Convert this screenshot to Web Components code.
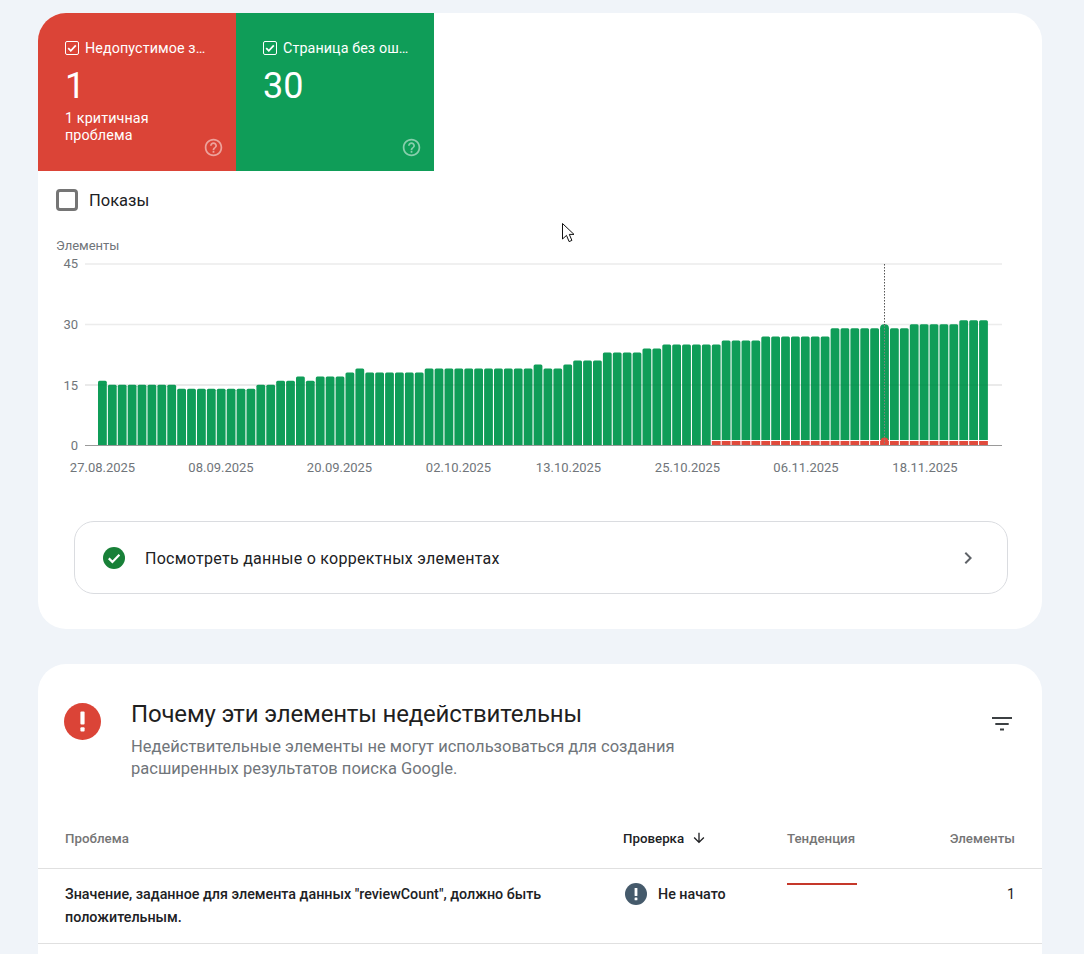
<!DOCTYPE html>
<html lang="ru">
<head>
<meta charset="utf-8">
<title>Элементы</title>
<style>
html,body{margin:0;height:954px;overflow:hidden;background:#f0f4f9}
body{font-family:Roboto,"Liberation Sans",sans-serif;color:#1f1f1f}
</style>
</head>
<body>
<gsc-page>
  <gsc-card>
    <div style="display:flex">
      <gsc-tile color="#db4437" label="Недопустимое значение" value="1">1 критичная<br>проблема</gsc-tile>
      <gsc-tile color="#0f9d58" label="Страница без ошибок" value="30"></gsc-tile>
    </div>
    <gsc-toggle>Показы</gsc-toggle>
    <gsc-chart></gsc-chart>
    <gsc-link-row>Посмотреть данные о корректных элементах</gsc-link-row>
  </gsc-card>
  <gsc-card flush>
    <gsc-issue-head title-text="Почему эти элементы недействительны">Недействительные элементы не могут использоваться для создания расширенных результатов поиска Google.</gsc-issue-head>
    <gsc-issue-table></gsc-issue-table>
  </gsc-card>
</gsc-page>
<gsc-cursor></gsc-cursor>
<script>
const mk=(html)=>{const t=document.createElement('template');t.innerHTML=html;return t};
class Base extends HTMLElement{
  constructor(){super();this.attachShadow({mode:'open'});this.shadowRoot.append(this.constructor.tpl.content.cloneNode(true))}
}
class GscPage extends Base{static tpl=mk(`<style>:host{display:flex;flex-direction:column;gap:35px;padding:13px 42px 0 38px}</style><slot></slot>`)}
class GscCard extends Base{static tpl=mk(`<style>:host{display:block;background:#fff;border-radius:28px;overflow:hidden}:host([flush]){border-radius:28px 28px 0 0}</style><slot></slot>`)}
class GscTile extends Base{
  static tpl=mk(`<style>
  :host{display:block;position:relative;box-sizing:border-box;width:198px;height:158px;padding:27px 0 0 27px;color:#fff}
  .top{display:flex;align-items:center;gap:6px;height:16px}
  svg.c{flex:none;width:14px;height:14px}
  .l{font-size:14.3px;line-height:16px;font-weight:400;letter-spacing:.1px;white-space:nowrap;overflow:hidden;text-overflow:ellipsis;width:127px}
  .v{font-size:36px;line-height:42px;margin-top:9px;height:42px}
  .s{font-size:14.3px;line-height:17px;font-weight:400;letter-spacing:.12px;margin-top:3px;max-width:120px}
  svg.h{position:absolute;right:12px;bottom:13.5px;width:21px;height:21px;fill:#fff;opacity:.5}
  </style>
  <div class="top"><svg class="c" viewBox="0 0 14 14"><rect x=".5" y=".5" width="13" height="13" rx="1.5" fill="none" stroke="#fff"/><path d="M3.2 7.2l2.6 2.6 5-5.4" fill="none" stroke="#fff" stroke-width="1.8"/></svg><div class="l"></div></div>
  <div class="v"></div><div class="s"><slot></slot></div>
  <svg class="h" viewBox="0 0 24 24"><path d="M11 18h2v-2h-2v2zm1-16C6.48 2 2 6.48 2 12s4.48 10 10 10 10-4.48 10-10S17.52 2 12 2zm0 18c-4.41 0-8-3.59-8-8s3.59-8 8-8 8 3.59 8 8-3.59 8-8 8zm0-14c-2.21 0-4 1.79-4 4h2c0-1.1.9-2 2-2s2 .9 2 2c0 2-3 1.75-3 5h2c0-2.25 3-2.5 3-5 0-2.21-1.79-4-4-4z"/></svg>`);
  connectedCallback(){const r=this.shadowRoot;this.style.background=this.getAttribute('color');
    r.querySelector('.l').textContent=this.getAttribute('label');r.querySelector('.v').textContent=this.getAttribute('value')}
}
class GscToggle extends Base{static tpl=mk(`<style>
  :host{display:flex;align-items:center;gap:11px;height:22px;margin:18px 0 0 18px;font-size:16.5px;color:#202124}
  i{display:block;box-sizing:border-box;width:22px;height:22px;border:3px solid #757575;border-radius:4px}
  </style><i></i><span><slot></slot></span>`)}
class GscChart extends Base{
  static tpl=mk(`<style>:host{display:block;height:286px;margin-top:24px}svg{display:block}
  text{font-family:Roboto,"Liberation Sans",sans-serif;font-size:13px;fill:#70757a}</style>
  <svg width="1004" height="250" viewBox="38 235 1004 250"></svg>`);
  connectedCallback(){
    const rle=[[16,1],[15,7],[14,8],[15,2],[16,2],[17,1],[16,1],[17,3],[18,1],[19,1],[18,6],[19,11],[20,1],[19,2],[20,1],[21,3],[23,4],[24,2],[25,6],[26,4],[27,7],[29,5],[30,1],[29,2],[30,5],[31,3]];
    const vals=rle.flatMap(([v,n])=>Array(n).fill(v));
    const base=445,u=181/45,p=9.9,w=8.8,x0=98;
    let s='<text x="56" y="250">Элементы</text>';
    [[45,264,268],[30,324.5,329],[15,385,389.5]].forEach(([n,y,ty])=>{
      s+=`<rect x="85" y="${y-.75}" width="917" height="1.5" fill="#ececec"/><text x="78" y="${ty}" text-anchor="end">${n}</text>`});
    s+=`<text x="78" y="450" text-anchor="end">0</text>`;
    vals.forEach((v,i)=>{
      const x=x0+i*p,top=base-v*u,r=i===79?4:1.5,red=i>=62,b=red?440:base;
      s+=`<path fill="#0f9d58" d="M${x} ${b}V${top+r}Q${x} ${top} ${x+r} ${top}H${x+w-r}Q${x+w} ${top} ${x+w} ${top+r}V${b}Z"/>`;
      if(red)s+=`<rect x="${x}" y="441" width="${w}" height="4" fill="#e04a3c"/>`;
    });
    s+=`<rect x="85" y="384.5" width="917" height="1" fill="#000" opacity=".05"/>`;
    s+=`<circle cx="884.5" cy="441.5" r="4" fill="#e04a3c"/>`;
    s+=`<line x1="884.5" x2="884.5" y1="264" y2="325" stroke="#555" stroke-dasharray="1.5 1.5"/><line x1="884.5" x2="884.5" y1="325" y2="445" stroke="#7d8a80" stroke-dasharray="1.5 1.5"/>`;
    s+=`<rect x="85" y="445" width="917" height="1" fill="#9a9a9a"/>`;
    [['27.08.2025',102.5],['08.09.2025',221],['20.09.2025',339.5],['02.10.2025',458.5],['13.10.2025',568.5],['25.10.2025',687.5],['06.11.2025',806],['18.11.2025',925]]
      .forEach(([t,x])=>{s+=`<text x="${x}" y="472" text-anchor="middle">${t}</text>`});
    this.shadowRoot.querySelector('svg').innerHTML=s;
  }
}
class GscLinkRow extends Base{static tpl=mk(`<style>
  :host{display:flex;align-items:center;box-sizing:border-box;height:73px;margin:0 34px 35px 36px;padding:0 27px 0 28px;border:1px solid #dadce0;border-radius:20px;font-size:16px;letter-spacing:.27px;color:#202124}
  svg.o{width:22px;height:22px;flex:none;margin-right:20px}
  span{flex:1;padding-top:1px}
  svg.n{width:24px;height:24px;flex:none;fill:#5f6368}
  </style>
  <svg class="o" viewBox="0 0 22 22"><circle cx="11" cy="11" r="11" fill="#188038"/><path d="M5.8 11.4l3.6 3.5 7-7.2" fill="none" stroke="#fff" stroke-width="2.2"/></svg>
  <span><slot></slot></span>
  <svg class="n" viewBox="0 0 24 24"><path d="M10 6L8.6 7.4 13.2 12l-4.6 4.6L10 18l6-6z"/></svg>`)}
class GscIssueHead extends Base{
  static tpl=mk(`<style>
  :host{display:flex;box-sizing:border-box;height:156px;padding:35px 28px 0 26px}
  svg.e{width:37px;height:37px;flex:none;margin:4px 30px 0 0}
  .m{flex:1}
  h2{margin:0;font-size:24px;line-height:30px;letter-spacing:-.17px;font-weight:400;color:#1f1f1f;font-family:Roboto,"Liberation Sans",sans-serif}
  p{margin:7px 0 0;width:580px;font-size:16.5px;line-height:22px;color:#70757a}
  svg.f{width:24px;height:24px;flex:none;margin:13px 0 0;fill:#3c4043}
  </style>
  <svg class="e" viewBox="0 0 37 37"><circle cx="18.5" cy="18.5" r="18.5" fill="#db4437"/><rect x="16.4" y="8.5" width="4.2" height="13" rx="1" fill="#fff"/><rect x="16.4" y="24.2" width="4.2" height="4.2" rx="1" fill="#fff"/></svg>
  <div class="m"><h2></h2><p><slot></slot></p></div>
  <svg class="f" viewBox="0 0 24 24"><rect x="2" y="5" width="20" height="2"/><rect x="5.3" y="11" width="13.4" height="2"/><rect x="10" y="16.5" width="4" height="2"/></svg>`);
  connectedCallback(){this.shadowRoot.querySelector('h2').textContent=this.getAttribute('title-text')}
}
class GscIssueTable extends Base{static tpl=mk(`<style>
  :host{display:block;padding-bottom:10px}
  .r{display:grid;grid-template-columns:558px 164px 1fr 110px;padding:0 27px;border-bottom:1px solid #e0e0e0}
  .h{align-items:center;font-size:13.3px;font-weight:500;color:#757575;box-sizing:border-box;height:49px;padding-bottom:12px}
  .h .a{color:#202124;display:flex;align-items:center;gap:7px}
  .h svg{width:16px;height:16px;fill:#202124}
  .e{text-align:right}
  .b{height:75px;box-sizing:border-box;font-size:14.3px;font-weight:500;color:#202124;padding-top:14px;line-height:23px}
  .b .e{font-weight:400}
  .st{display:flex;align-items:flex-start;gap:11px;padding-left:2px}
  .st svg{width:22px;height:22px;flex:none}
  .sp{width:70px;height:2px;background:#c5382a}
  </style>
  <div class="r h"><div>Проблема</div><div class="a">Проверка <svg viewBox="0 0 24 24"><path d="M20 12l-1.41-1.41L13 16.17V4h-2v12.17l-5.58-5.59L4 12l8 8 8-8z"/></svg></div><div>Тенденция</div><div class="e">Элементы</div></div>
  <div class="r b"><div style="max-width:490px">Значение, заданное для элемента данных "reviewCount", должно быть положительным.</div>
  <div class="st"><svg viewBox="0 0 22 22"><circle cx="11" cy="11" r="11" fill="#455a6b"/><rect x="9.6" y="5" width="2.8" height="8" rx=".6" fill="#fff"/><rect x="9.6" y="14.5" width="2.8" height="2.8" rx=".6" fill="#fff"/></svg><span>Не начато</span></div>
  <div><div class="sp"></div></div><div class="e">1</div></div>`)}
class GscCursor extends Base{static tpl=mk(`<style>:host{position:absolute;left:562px;top:223px;width:13px;height:21px}svg{display:block}</style>
  <svg width="13" height="21" viewBox="0 0 13 21"><path d="M.5.5V16l4-3.6 2.6 6.2 2.8-1.2-2.6-6H12z" fill="#fff" stroke="#111" stroke-width="1"/></svg>`)}
customElements.define('gsc-page',GscPage);
customElements.define('gsc-card',GscCard);
customElements.define('gsc-tile',GscTile);
customElements.define('gsc-toggle',GscToggle);
customElements.define('gsc-chart',GscChart);
customElements.define('gsc-link-row',GscLinkRow);
customElements.define('gsc-issue-head',GscIssueHead);
customElements.define('gsc-issue-table',GscIssueTable);
customElements.define('gsc-cursor',GscCursor);
</script>
</body>
</html>
